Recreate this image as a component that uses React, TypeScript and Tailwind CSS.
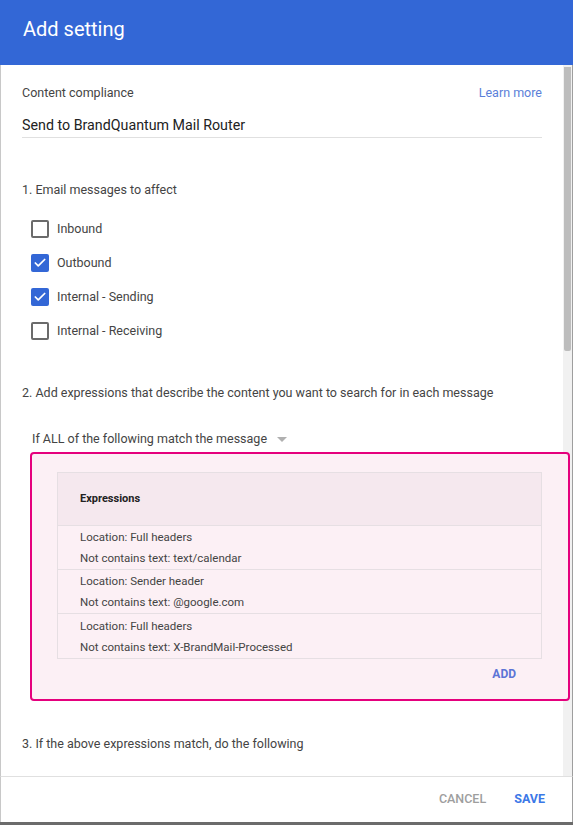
import { Check } from 'lucide-react'

const boxes = [
  { label: 'Inbound', on: false },
  { label: 'Outbound', on: true },
  { label: 'Internal - Sending', on: true },
  { label: 'Internal - Receiving', on: false },
]

const rows = [
  ['Location: Full headers', 'Not contains text: text/calendar'],
  ['Location: Sender header', 'Not contains text: @google.com'],
  ['Location: Full headers', 'Not contains text: X-BrandMail-Processed'],
]

function Checkbox({ on }: { on: boolean }) {
  if (on) {
    return (
      <span className="w-[18px] h-[18px] rounded-[2px] bg-[#3367d6] flex items-center justify-center">
        <Check size={14} strokeWidth={3} className="text-white" />
      </span>
    )
  }
  return <span className="w-[18px] h-[18px] rounded-[2px] border-2 border-[#6b6b6b] bg-white" />
}

export default function App() {
  return (
    <div className="w-[573px] h-[825px] flex flex-col bg-white overflow-hidden font-['Roboto',sans-serif] text-[#3c4043]">
      {/* Header */}
      <div className="h-[65px] shrink-0 bg-[#3367d6] flex items-center pl-[23px] pb-[8px]">
        <h1 className="text-white text-[20px]">Add setting</h1>
      </div>

      {/* Body */}
      <div className="flex-1 flex border-l border-[#c8c8c8] min-h-0">
        <div className="flex-1 pl-[21px] pr-[21px] pt-[19px] text-[12.5px]">
          <div className="flex justify-between items-center h-[18px]">
            <span className="text-[#444]">Content compliance</span>
            <span className="text-[#5b7fd9]">Learn more</span>
          </div>
          <div className="mt-[13px] pb-[1px] border-b border-[#e0e0e0] text-[14.25px] text-[#222]">
            Send to BrandQuantum Mail Router
          </div>

          <div className="mt-[43px] h-[18px] flex items-center text-[#444]">1. Email messages to affect</div>
          <div className="mt-[13px] flex flex-col">
            {boxes.map(b => (
              <div key={b.label} className="h-[34px] flex items-center pl-[9px] gap-[8px] text-[#444]">
                <Checkbox on={b.on} />
                <span>{b.label}</span>
              </div>
            ))}
          </div>

          <div className="mt-[36px] h-[18px] flex items-center text-[#444]">
            2. Add expressions that describe the content you want to search for in each message
          </div>
          <div className="mt-[28px] h-[18px] flex items-center pl-[10px] text-[#444]">
            If ALL of the following match the message
            <span className="ml-[10px] w-0 h-0 border-l-[5px] border-r-[5px] border-t-[5px] border-l-transparent border-r-transparent border-t-[#b0b0b0]" />
          </div>

          <div className="relative z-10 mt-[4px] ml-[8px] -mr-[28px] h-[249px] border-2 border-[#e5007d] rounded-[4px] bg-[#fcf0f5] pt-[18px] pl-[25px] pr-[26px]">
            <div className="border border-[#e6dfe3] bg-[#fcf0f5]">
              <div className="h-[53px] bg-[#f5e8ee] border-b border-[#e6dfe3] flex items-center pl-[22px] text-[11px] font-bold text-[#222]">
                Expressions
              </div>
              {rows.map((r, i) => (
                <div
                  key={i}
                  className={'h-[44px] flex flex-col justify-center gap-[5px] pl-[22px] text-[11.5px] text-[#444] ' + (i < 2 ? 'border-b border-[#e6dfe3]' : '')}
                >
                  <span className="leading-[16px]">{r[0]}</span>
                  <span className="leading-[16px]">{r[1]}</span>
                </div>
              ))}
            </div>
            <div className="flex justify-end pr-[26px] mt-[6px] text-[12px] font-bold text-[#5c74d6]">ADD</div>
          </div>

          <div className="mt-[34px] h-[18px] flex items-center text-[#444]">3. If the above expressions match, do the following</div>
        </div>

        {/* Scrollbar */}
        <div className="w-[10px] shrink-0 bg-[#f1f1f1] border-r border-[#9e9e9e] pt-[2px]">
          <div className="ml-[1px] w-[7px] h-[284px] bg-[#bdbdbd] rounded-b-[2px]" />
        </div>
      </div>

      {/* Footer */}
      <div className="h-[46px] shrink-0 border-t border-[#e0e0e0] border-l border-l-[#c8c8c8] border-r border-r-[#9e9e9e] flex items-center justify-end gap-[28px] pr-[27px] text-[12.5px] font-medium">
        <span className="text-[#9e9e9e]">CANCEL</span>
        <span className="text-[#3b78e7] font-bold">SAVE</span>
      </div>
      <div className="h-[3px] shrink-0 bg-[#6b6b6b]" />
    </div>
  )
}
